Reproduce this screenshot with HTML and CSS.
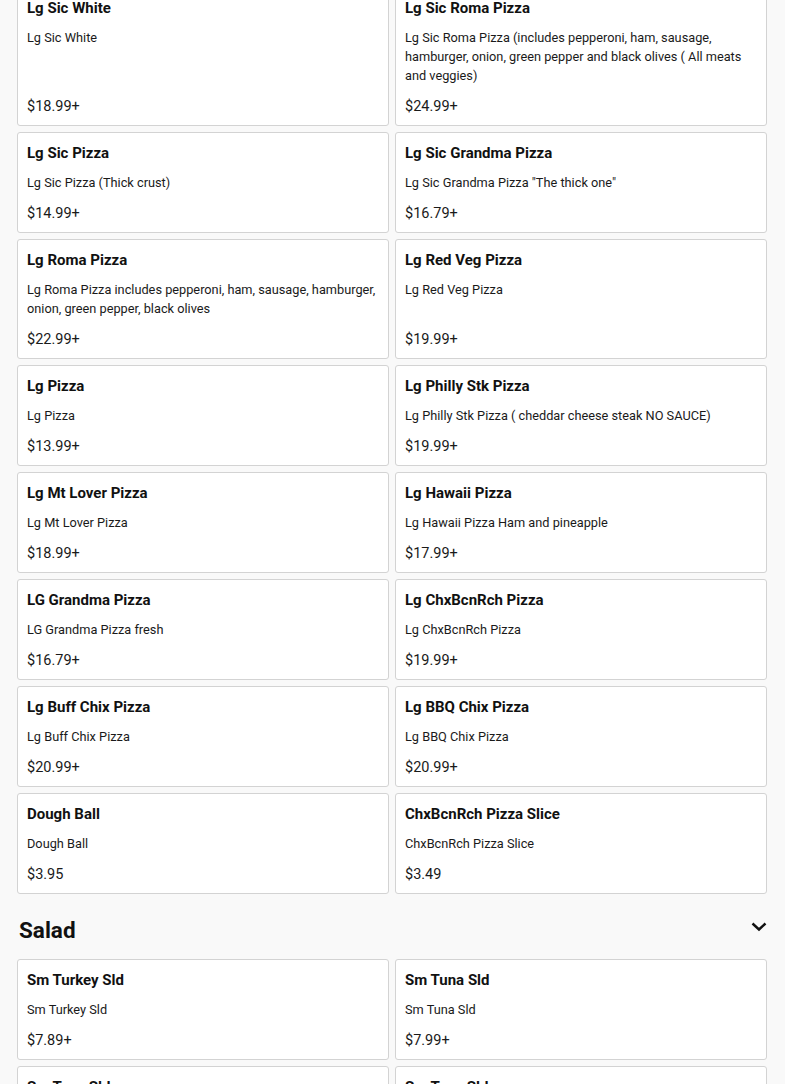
FILE: index.html
```html
<!DOCTYPE html>
<html lang="en">
<head>
<meta charset="utf-8">
<title>Menu</title>
<link rel="stylesheet" href="styles.css">
</head>
<body>
<main class="menu">
  <section class="category category-first">
    <div class="grid">
      <div class="card"><div class="title">Lg Sic White</div><div class="desc">Lg Sic White</div><div class="price">$18.99+</div></div>
      <div class="card"><div class="title">Lg Sic Roma Pizza</div><div class="desc">Lg Sic Roma Pizza (includes pepperoni, ham, sausage, hamburger, onion, green pepper and black olives ( All meats and veggies)</div><div class="price">$24.99+</div></div>
      <div class="card"><div class="title">Lg Sic Pizza</div><div class="desc">Lg Sic Pizza (Thick crust)</div><div class="price">$14.99+</div></div>
      <div class="card"><div class="title">Lg Sic Grandma Pizza</div><div class="desc">Lg Sic Grandma Pizza "The thick one"</div><div class="price">$16.79+</div></div>
      <div class="card"><div class="title">Lg Roma Pizza</div><div class="desc">Lg Roma Pizza includes pepperoni, ham, sausage, hamburger, onion, green pepper, black olives</div><div class="price">$22.99+</div></div>
      <div class="card"><div class="title">Lg Red Veg Pizza</div><div class="desc">Lg Red Veg Pizza</div><div class="price">$19.99+</div></div>
      <div class="card"><div class="title">Lg Pizza</div><div class="desc">Lg Pizza</div><div class="price">$13.99+</div></div>
      <div class="card"><div class="title">Lg Philly Stk Pizza</div><div class="desc">Lg Philly Stk Pizza ( cheddar cheese steak NO SAUCE)</div><div class="price">$19.99+</div></div>
      <div class="card"><div class="title">Lg Mt Lover Pizza</div><div class="desc">Lg Mt Lover Pizza</div><div class="price">$18.99+</div></div>
      <div class="card"><div class="title">Lg Hawaii Pizza</div><div class="desc">Lg Hawaii Pizza Ham and pineapple</div><div class="price">$17.99+</div></div>
      <div class="card"><div class="title">LG Grandma Pizza</div><div class="desc">LG Grandma Pizza fresh</div><div class="price">$16.79+</div></div>
      <div class="card"><div class="title">Lg ChxBcnRch Pizza</div><div class="desc">Lg ChxBcnRch Pizza</div><div class="price">$19.99+</div></div>
      <div class="card"><div class="title">Lg Buff Chix Pizza</div><div class="desc">Lg Buff Chix Pizza</div><div class="price">$20.99+</div></div>
      <div class="card"><div class="title">Lg BBQ Chix Pizza</div><div class="desc">Lg BBQ Chix Pizza</div><div class="price">$20.99+</div></div>
      <div class="card"><div class="title">Dough Ball</div><div class="desc">Dough Ball</div><div class="price">$3.95</div></div>
      <div class="card"><div class="title">ChxBcnRch Pizza Slice</div><div class="desc">ChxBcnRch Pizza Slice</div><div class="price">$3.49</div></div>
    </div>
  </section>
  <section class="category">
    <header class="cat-head">
      <h2 class="cat-title">Salad</h2>
      <svg class="chevron" width="16" height="10" viewBox="0 0 16 10" aria-hidden="true"><polyline points="1.5,1.5 8,7.5 14.5,1.5" fill="none" stroke="#111" stroke-width="2.4"/></svg>
    </header>
    <div class="grid">
      <div class="card"><div class="title">Sm Turkey Sld</div><div class="desc">Sm Turkey Sld</div><div class="price">$7.89+</div></div>
      <div class="card"><div class="title">Sm Tuna Sld</div><div class="desc">Sm Tuna Sld</div><div class="price">$7.99+</div></div>
      <div class="card"><div class="title">Sm Taco Sld</div><div class="desc">Sm Taco Sld</div><div class="price">$7.89+</div></div>
      <div class="card"><div class="title">Sm Taco Sld</div><div class="desc">Sm Taco Sld</div><div class="price">$7.99+</div></div>
    </div>
  </section>
</main>
</body>
</html>
```
FILE: styles.css
```css
html, body {
  margin: 0;
  padding: 0;
  background: #f9f9f9;
  color: #111;
  font-family: Roboto, "Liberation Sans", Arial, sans-serif;
}
body {
  overflow: hidden;
}
.menu {
  padding: 0 18px 0 17px;
}
.category-first {
  margin-top: -13px;
}
.grid {
  display: grid;
  grid-template-columns: 1fr 1fr;
  gap: 6px;
}
.card {
  display: flex;
  flex-direction: column;
  background: #fff;
  border: 1px solid #d3d3d3;
  border-radius: 3px;
  padding: 9px 8px 7px 9px;
}
.title {
  font-size: 15px;
  font-weight: 700;
  line-height: 22px;
  color: #111;
}
.desc {
  margin-top: 9px;
  font-size: 12.75px;
  line-height: 19px;
  color: #1a1a1a;
}
.price {
  margin-top: auto;
  padding-top: 11px;
  font-size: 14.5px;
  line-height: 22px;
  color: #1a1a1a;
}
.cat-head {
  display: flex;
  align-items: center;
  justify-content: space-between;
  margin: 21px 0 14px;
  padding-left: 2px;
  height: 30px;
}
.cat-title {
  margin: 0;
  font-size: 22.5px;
  font-weight: 700;
  line-height: 30px;
  color: #111;
}
.chevron {
  display: block;
  margin-top: -7px;
}
```
